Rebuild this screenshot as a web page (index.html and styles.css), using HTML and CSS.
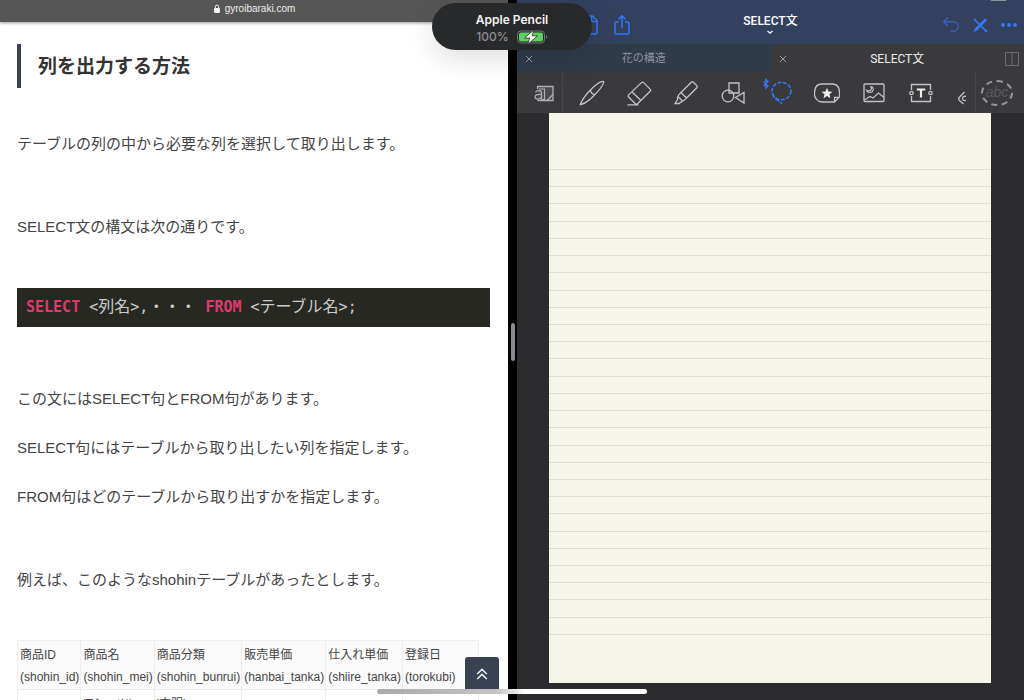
FILE: index.html
```html
<!DOCTYPE html>
<html lang="ja">
<head>
<meta charset="utf-8">
<title>SELECT文</title>
<link rel="stylesheet" href="styles.css">
</head>
<body>
<div class="screen">
  <section class="browser">
    <header class="address-bar">
      <svg class="lock" viewBox="0 0 8 10" aria-hidden="true"><rect x="1" y="4" width="6" height="5" rx="1" fill="#f2f2f2"/><path d="M2.3 4.500V2.800a1.700 1.700 0 0 1 3.400 0V4.500" fill="none" stroke="#f2f2f2"/></svg>
      <span>gyroibaraki.com</span>
    </header>
    <article class="article">
      <h2 class="heading">列を出力する方法</h2>
      <p class="lead">テーブルの列の中から必要な列を選択して取り出します。</p>
      <p class="spaced">SELECT文の構文は次の通りです。</p>
      <pre class="code"><code><b>SELECT</b> &lt;<span>列名</span>&gt;,<span>・・・</span> <b>FROM</b> &lt;<span>テーブル名</span>&gt;;</code></pre>
      <p>この文にはSELECT句とFROM句があります。</p>
      <p>SELECT句にはテーブルから取り出したい列を指定します。</p>
      <p>FROM句はどのテーブルから取り出すかを指定します。</p>
      <p class="spaced">例えば、このようなshohinテーブルがあったとします。</p>
      <table class="shohin">
        <thead>
          <tr>
            <th>商品ID<br>(shohin_id)</th>
            <th>商品名<br>(shohin_mei)</th>
            <th>商品分類<br>(shohin_bunrui)</th>
            <th>販売単価<br>(hanbai_tanka)</th>
            <th>仕入れ単価<br>(shiire_tanka)</th>
            <th>登録日<br>(torokubi)</th>
          </tr>
        </thead>
        <tbody>
          <tr><td></td><td>'Tシャツ'</td><td>'衣服'</td><td></td><td></td><td></td></tr>
        </tbody>
      </table>
    </article>
    <button class="to-top" aria-label="トップへ戻る">
      <svg viewBox="0 0 12 12" width="12" height="12" aria-hidden="true"><path d="M1.200 6 6 1.400 10.800 6M1.200 11 6 6.400 10.800 11" fill="none" stroke="#eceef2" stroke-width="1.500"/></svg>
    </button>
  </section>

  <div class="divider"><span class="grip"></span></div>

  <section class="notes">
    <header class="title-bar">
      <div class="title-left">
        <button aria-label="書類"><svg viewBox="0 0 20 22" width="20" height="22"><path d="M12 2h1.500L18 6.500V18a2 2 0 0 1-2 2H4a2 2 0 0 1-2-2V4a2 2 0 0 1 2-2zM12.500 2v5.500H18"/></svg></button>
        <button aria-label="共有"><svg viewBox="0 0 20 22" width="20" height="22"><path d="M7 8H4.500A1.500 1.500 0 0 0 3 9.500v9A1.500 1.500 0 0 0 4.500 20h11a1.500 1.500 0 0 0 1.500-1.500v-9A1.500 1.500 0 0 0 15.500 8H13M10 14V2M6.500 5.300 10 1.800l3.500 3.500"/></svg></button>
      </div>
      <button class="doc-title">SELECT文
        <svg viewBox="0 0 8 5" width="8" height="5"><path d="M1.500 1 4 3.200 6.500 1" fill="none" stroke="#fff" stroke-width="1.300"/></svg>
      </button>
      <div class="title-right">
        <button class="undo" aria-label="取り消す"><svg viewBox="0 0 18 18" width="18" height="18"><path d="M6 1.500 1.800 5.800 6 10.200M2 5.800h9.500a4.700 4.700 0 0 1 0 9.400H8.500"/></svg></button>
        <button aria-label="閲覧モード"><svg viewBox="0 0 18 18" width="18" height="18"><path d="M3 3l12 12" stroke-width="1.700"/><path d="M2.300 16.200 4 12.500 14.200 2.300l2 2L6 14.500z" fill="#3478f6" stroke="none"/><path d="m14 14 2 2" stroke-width="2"/></svg></button>
        <button aria-label="その他"><svg viewBox="0 0 18 18" width="18" height="18"><g fill="#3478f6" stroke="none"><circle cx="3" cy="9" r="1.900"/><circle cx="9" cy="9" r="1.900"/><circle cx="15" cy="9" r="1.900"/></g></svg></button>
      </div>
      <span class="window-dots"></span>
    </header>

    <nav class="tabs">
      <div class="tab">
        <button class="close" aria-label="タブを閉じる"><svg viewBox="0 0 8 8" width="8" height="8"><path d="m1 1 6 6M7 1 1 7"/></svg></button>
        <span class="tab-name">花の構造</span>
      </div>
      <div class="tab active">
        <button class="close" aria-label="タブを閉じる"><svg viewBox="0 0 8 8" width="8" height="8"><path d="m1 1 6 6M7 1 1 7"/></svg></button>
        <span class="tab-name">SELECT文</span>
        <button class="split" aria-label="分割表示"><svg viewBox="0 0 14 14" width="14" height="14"><path d="M.5.5h13v13H.5zM7 .5v13"/></svg></button>
      </div>
    </nav>

    <div class="toolbar">
      <button class="zoom-tool" aria-label="ズームウインドウ"><svg viewBox="0 0 20 18" width="20" height="18"><path d="M3.500 5V2.500h15.500v14H3.500" fill="#4a4a4e"/><path d="M1.500 8.500C2.500 6 7.500 6 7.500 9v6.500M7.500 10.500c-3-.5-6.500 0-6.500 2.500s5 3 6.500 0M5 5h5.500v10.500H8M19 10.500l-6 6" stroke-width="1.200"/></svg></button>
      <button aria-label="ペン"><svg viewBox="0 0 26 26" width="26" height="26"><path d="M1.300 24.700C2.500 21 5.500 16.500 9.500 12 14 7 20 2 23.500 1.300c1 0 1.300.3 1.100 1.200C24 6 19 11.500 14.500 16 10 20.500 5 24 1.300 24.700zM11.500 10c.3 2.500 1.500 4 4.200 4.800"/></svg></button>
      <button aria-label="消しゴム"><svg viewBox="0 0 26 26" width="26" height="26"><path d="M15.500 2.600a1.500 1.500 0 0 1 2.100 0l6.500 6.500a1.500 1.500 0 0 1 0 2.100L11.500 23.800a1.500 1.500 0 0 1-2.100 0l-6.800-6.800a1.500 1.500 0 0 1 0-2.100zM6 12l9 8.500M1.500 24.800h11"/></svg></button>
      <button aria-label="蛍光ペン"><svg viewBox="0 0 26 26" width="26" height="26"><path d="M8 12.500 18.300 2.200a1.500 1.500 0 0 1 2.100 0l3.400 3.400a1.500 1.500 0 0 1 0 2.100L13.500 18zM8 12.500c-1.500 1.500-3 2.500-3 4l4.500 4.500c1.500 0 2.500-1.500 4-3M5 16.500c-.8 1-.7 2-.3 2.800L2 23.500h4.500l.8-1.300c1 .3 1.700-.3 2.200-1.200"/></svg></button>
      <button aria-label="図形"><svg viewBox="0 0 26 26" width="26" height="26"><path d="M9 3h10v10H9zM24 12.500v10.500l-8.500-5.500z"/><circle cx="8" cy="16" r="5.800"/></svg></button>
      <button class="lasso" aria-label="なげなわ"><svg viewBox="0 0 40 30" width="40" height="30"><path d="m3.500 3.500 4.500 4.500-2.200 2.200V1.400L8 3.500 3.500 8" stroke-width="1.300"/><g stroke-width="1.500"><ellipse cx="21.500" cy="13" rx="9.500" ry="8.700" stroke-dasharray="4 1.500"/><path d="M12.500 15c0 3.500 2.500 6 5 7l4.500 3.500" stroke-dasharray="5 1.200"/></g></svg></button>
      <button aria-label="ステッカー"><svg viewBox="0 0 26 26" width="26" height="26"><path d="M20.500 22H8a8 8 0 0 1-7.500-9C.5 7.500 3 4 8 4h10c5 0 7.500 3.500 7.500 8.500v4.300zM20.500 22v-4.700h4.800"/><path d="m13 7.800 1.500 3.700 4 .3-3 2.500.9 3.900-3.400-2.100-3.400 2.100.9-3.900-3-2.500 4-.3z" fill="#eee" stroke="none"/></svg></button>
      <button aria-label="画像"><svg viewBox="0 0 26 26" width="26" height="26"><rect x="3" y="4" width="20" height="17.500" rx="1"/><path d="M3.500 20 9 16.500l3 1.500 5.500-5 5.500 4.500M9.800 6.500c2 3.200-1.300 5.500-4.300 3.700 1.200 3.300 6.500 2.800 6.700-.7.100-1.500-.9-2.800-2.400-3z" stroke-width="1.100"/></svg></button>
      <button aria-label="テキスト"><svg viewBox="0 0 26 26" width="26" height="26"><path d="M3.500 10V4.500h19V10M3.500 16v5.500h19V16"/><circle cx="3.500" cy="13" r="1.700"/><circle cx="22.500" cy="13" r="1.700"/><path d="M8.800 9.500h8.400M13 9.500v8" stroke="#eee" stroke-width="2.200"/></svg></button>
      <button class="more-tool" aria-label="その他のツール"><svg viewBox="0 0 10 14" width="10" height="14"><path d="M7.500 1 2.500 6a2.500 2.500 0 0 0 0 3.500L6.500 13M9 5.300C6.500 5 5.500 6 5.500 7.500S6.500 10 9 9.500"/></svg></button>
      <button class="lasso-preset" aria-label="なげなわ設定"><span>abc</span></button>
    </div>

    <main class="canvas">
      <div class="sheet">
        <hr><hr><hr><hr><hr><hr><hr><hr><hr><hr><hr><hr><hr><hr>
        <hr><hr><hr><hr><hr><hr><hr><hr><hr><hr><hr><hr><hr><hr>
      </div>
    </main>
  </section>

  <div class="pencil-status" role="status">
    <strong>Apple Pencil</strong>
    <span class="charge">100%
      <svg viewBox="0 0 32 16" width="32" height="16" aria-hidden="true"><rect x="1.500" y="2" width="27" height="12" rx="3.500" fill="none" stroke="#77777b"/><rect x="3" y="3.500" width="24" height="9" rx="2" fill="#5fd05f"/><path d="M30 6c1.500.5 1.500 3.500 0 4z" fill="#77777b"/><path d="M18 .8 8.500 9h5.200l-2 6.500L21.500 6.800H16z" fill="#fff" stroke="#28292b" stroke-width=".8"/></svg>
    </span>
  </div>
  <div class="home-indicator"></div>
</div>
</body>
</html>
```
FILE: styles.css
```css
* { box-sizing: border-box; }

body {
  margin: 0;
  background: #000;
  font-family: "Liberation Sans", "Noto Sans CJK JP", sans-serif;
  color: #444;
}

button {
  display: grid;
  place-items: center;
  margin: 0;
  padding: 0;
  border: 0;
  background: none;
  color: inherit;
  font: inherit;
}

svg { display: block; }

.screen {
  position: relative;
  display: grid;
  grid-template-columns: 508fr 9px 507fr;
  height: 100vh;
  overflow: hidden;
}

/* Browser pane */
.browser {
  position: relative;
  min-width: 0;
  overflow: hidden;
  background: #fff;
}

.address-bar {
  display: flex;
  justify-content: center;
  align-items: center;
  gap: 4px;
  height: 22px;
  padding: 0 0 4px;
  background: #565656;
  box-shadow: 0 1px 3px #0006;
  color: #eee;
  font: 10px/16px "Liberation Sans", sans-serif;
}

.lock { width: 8px; height: 10px; }

.article { padding: 22px 18px 0 17px; }

.heading {
  margin: 0;
  padding: 2px 0 0 17px;
  border-left: 4px solid #3a4153;
  color: #333;
  font-size: 19px;
  line-height: 42px;
}

.article p {
  margin: 22px 0 0;
  font-size: 15px;
  line-height: 27px;
}

.article .lead { margin-top: 42px; }
.article .spaced { margin-top: 56px; }

.code {
  margin: 48px 0 58px;
  padding: 0 9px;
  background: #272822;
  color: #ccc;
  font: 15px/39px "DejaVu Sans Mono", "Noto Sans CJK JP", monospace;
}

.code code { font: inherit; }
.code b { color: #e0386f; }
.code span { font-size: 16px; line-height: 1; }
.article .code + p { margin-top: 0; }

.shohin {
  margin-top: 47px;
  border-collapse: collapse;
  font-size: 12px;
  line-height: 22px;
  white-space: nowrap;
}

.shohin th,
.shohin td {
  padding: 3px 1px 1px 2px;
  border: 1px solid #eee;
  font-weight: 400;
  text-align: left;
}

.shohin th { background: #fafafa; }
.shohin th:last-child { padding-right: 22px; }

.to-top {
  position: absolute;
  right: 9px;
  bottom: 9px;
  width: 34px;
  height: 34px;
  border-radius: 3px 3px 0 0;
  background: #3a4153;
}

.divider {
  display: grid;
  place-items: center;
  padding-bottom: 16px;
  background: #000;
}

.grip {
  width: 4px;
  height: 38px;
  border-radius: 2px;
  background: #89898e;
}

/* Notes pane */
.notes {
  display: flex;
  flex-direction: column;
  min-width: 0;
  background: #2c2c2e;
}

.title-bar {
  position: relative;
  display: grid;
  grid-template-columns: 1fr auto 1fr;
  height: 44px;
  background: #33415e;
}

.title-bar svg {
  fill: none;
  stroke: #3478f6;
  stroke-width: 1.5;
}

.title-left,
.title-right {
  display: flex;
  align-items: center;
  gap: 11px;
  padding-top: 5px;
}

.title-left { gap: 13px; padding-left: 62px; }
.title-right { justify-content: flex-end; padding-right: 6px; }
.undo { opacity: .6; }

.doc-title {
  align-content: start;
  justify-items: center;
  padding-top: 12px;
  color: #fff;
  font: 500 12px/18px Roboto, "Noto Sans CJK JP", sans-serif;
}

.window-dots {
  position: absolute;
  top: -3px;
  right: 17px;
  width: 17px;
  height: 4px;
  border-radius: 2px;
  background: #8a93a5;
}

.tabs {
  display: grid;
  grid-template-columns: 1fr 1fr;
  height: 28px;
  background: #33415e;
}

.tab {
  display: grid;
  grid-template-columns: 24px 1fr 24px;
  align-items: center;
  padding-top: 2px;
  background: #303b4a;
  color: #8e959f;
  font: 11px/16px Roboto, "Noto Sans CJK JP", sans-serif;
}

.tab.active {
  border-radius: 4px 4px 0 0;
  background: #3a3a3c;
  color: #eee;
  font-size: 12px;
}

.tab-name { text-align: center; }
.tab svg { fill: none; stroke: #9a9a9e; }
.tab .split svg { stroke: #6d6d70; }

.toolbar {
  display: grid;
  grid-template-columns: 46fr 5fr repeat(8, 47fr) 32fr 48fr;
  height: 41px;
  background: #3a3a3c;
}

.toolbar svg {
  fill: none;
  stroke: #c4c4c6;
  stroke-width: 1.3;
}

.toolbar .zoom-tool {
  padding-left: 8px;
  border-right: 1px solid #48484a;
}

.toolbar .zoom-tool svg { stroke: #b0b0b3; }
.zoom-tool + button { grid-column: 3; }
.toolbar .lasso svg { stroke: #3478f6; }

.toolbar .more-tool {
  padding: 10px 0 0 4px;
  border-right: 1px solid #48484a;
}

.lasso-preset { padding-right: 6px; }

.lasso-preset span {
  width: 32px;
  height: 26px;
  border: 2px dashed #98989b;
  border-radius: 50%;
  color: #58585b;
  font: italic 14px/20px "Liberation Sans", sans-serif;
  text-align: center;
}

.canvas {
  flex: 1;
  padding: 0 33px 17px 32px;
}

.sheet {
  display: flex;
  flex-direction: column;
  justify-content: space-between;
  height: 100%;
  padding: 56px 0 48px;
  background: #f6f5e9;
}

.sheet hr {
  width: 100%;
  height: 1px;
  margin: 0;
  border: 0;
  background: #dfdfd6;
}

/* System overlays */
.pencil-status {
  position: absolute;
  top: 3px;
  left: 50%;
  display: flex;
  flex-direction: column;
  align-items: center;
  width: 160px;
  height: 47px;
  padding-top: 8px;
  border-radius: 24px;
  transform: translateX(-50%);
  background: #28292b;
  box-shadow: 0 8px 30px #0002;
  color: #f4f4f4;
  font: 12px/17px Inter, sans-serif;
}

.pencil-status strong { font-weight: 600; }

.charge {
  display: flex;
  align-items: center;
  gap: 7px;
  color: #8e8e92;
  font-weight: 500;
}

.home-indicator {
  position: absolute;
  bottom: 6px;
  left: 50%;
  width: 270px;
  height: 5px;
  border-radius: 3px;
  transform: translateX(-50%);
  background: linear-gradient(90deg, #aaa, #c4c4c4 45%, #fff 55%);
}
```
